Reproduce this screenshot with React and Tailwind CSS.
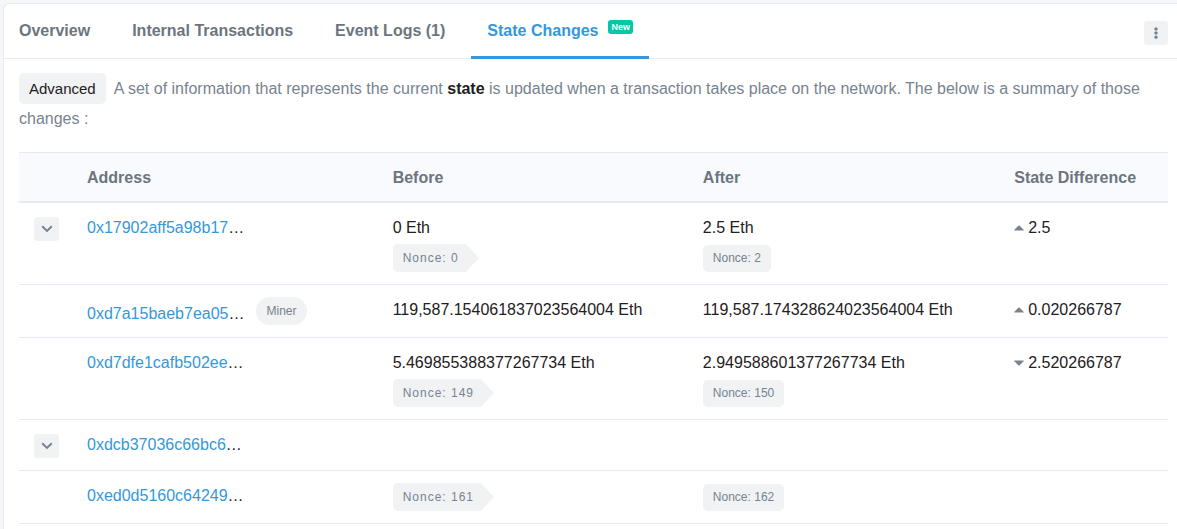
import { FaEllipsisV } from "react-icons/fa";

const tabs = [
  { label: "Overview" },
  { label: "Internal Transactions" },
  { label: "Event Logs (1)" },
  { label: "State Changes", active: true, badge: "New" },
];

const rows = [
  {
    address: "0x17902aff5a98b17",
    expandable: true,
    before: "0 Eth",
    nonceBefore: 0,
    after: "2.5 Eth",
    nonceAfter: 2,
    direction: "up",
    difference: "2.5",
  },
  {
    address: "0xd7a15baeb7ea05",
    tag: "Miner",
    before: "119,587.154061837023564004 Eth",
    after: "119,587.174328624023564004 Eth",
    direction: "up",
    difference: "0.020266787",
  },
  {
    address: "0xd7dfe1cafb502ee",
    before: "5.469855388377267734 Eth",
    nonceBefore: 149,
    after: "2.949588601377267734 Eth",
    nonceAfter: 150,
    direction: "down",
    difference: "2.520266787",
  },
  { address: "0xdcb37036c66bc6", expandable: true },
  { address: "0xed0d5160c64249", nonceBefore: 161, nonceAfter: 162 },
];

function Chevron() {
  return (
    <svg viewBox="0 0 12 8" className="h-2 w-3" fill="none" stroke="currentColor" strokeWidth="2" aria-hidden="true">
      <path d="M1.2 1.3 6 5.9l4.8-4.6" />
    </svg>
  );
}

function Caret({ direction }) {
  return (
    <svg viewBox="0 0 10 6" className="h-1.5 w-2.5 text-[#77838f]" fill="currentColor" aria-hidden="true">
      <path
        d={
          direction === "up"
            ? "M.8 5.6Q-.2 5.6.4 4.8L4.3.8Q5 .1 5.7.8L9.6 4.8Q10.2 5.6 9.2 5.6Z"
            : "M.8.4Q-.2.4.4 1.2L4.3 5.2Q5 5.9 5.7 5.2L9.6 1.2Q10.2.4 9.2.4Z"
        }
      />
    </svg>
  );
}

function NonceBefore({ value }) {
  return (
    <div className="flex">
      <span className="rounded-l-[5px] bg-[#f0f2f4] pr-[7px] pl-2.5 text-xs leading-7 tracking-[1px] text-[#77838f]">
        Nonce: {value}
      </span>
      <span className="border-y-[14px] border-l-[13px] border-y-transparent border-l-[#f0f2f4]" />
    </div>
  );
}

function NonceAfter({ value }) {
  return (
    <div className="flex pt-px">
      <span className="rounded-[5px] bg-[#f0f2f4] px-2.5 text-xs leading-[27px] text-[#77838f]">
        Nonce: {value}
      </span>
    </div>
  );
}

function StateRow({ row }) {
  return (
    <tr className="align-top">
      <td className="py-3 pl-[15px]">
        {row.expandable && (
          <button
            type="button"
            aria-label="Show storage changes"
            className="mt-0.5 flex h-6 w-[25px] items-center justify-center rounded-[3px] bg-[#f0f2f4] text-[#77838f]"
          >
            <Chevron />
          </button>
        )}
      </td>
      <td className="px-3 py-3">
        <div className="flex items-end gap-3">
          <span className={row.tag ? "leading-[22px]" : "leading-[26px]"}>
            <a href="#address" className="text-[#3498db]">{row.address}</a>…
          </span>
          {row.tag && (
            <span className="rounded-full bg-[#f0f2f4] px-2.5 text-xs leading-7 text-[#77838f]">{row.tag}</span>
          )}
        </div>
      </td>
      <td className="px-3 py-3">
        <div className="flex flex-col gap-[3px]">
          {row.before && <div>{row.before}</div>}
          {row.nonceBefore !== undefined && <NonceBefore value={row.nonceBefore} />}
        </div>
      </td>
      <td className="px-3 py-3">
        <div className="flex flex-col gap-[3px]">
          {row.after && <div>{row.after}</div>}
          {row.nonceAfter !== undefined && <NonceAfter value={row.nonceAfter} />}
        </div>
      </td>
      <td className="px-3 py-3">
        {row.difference && (
          <div className="flex items-center gap-1">
            <Caret direction={row.direction} />
            <span>{row.difference}</span>
          </div>
        )}
      </td>
    </tr>
  );
}

export default function App() {
  return (
    <div className="min-h-screen bg-[#f5f6f8] pt-[3px] pl-[3px] font-['Liberation_Sans',Arial,sans-serif] text-base leading-[26px] text-[#1e2022]">
      <main className="min-h-screen rounded-tl-md bg-white shadow-[inset_1px_1px_0_#e7eaf3]">
        <header className="flex items-center justify-between border-b border-[#e7eaf3] pr-[9px]">
          <nav className="-mb-px flex gap-2.5">
            {tabs.map((tab) => (
              <a
                key={tab.label}
                href="#tab"
                aria-current={tab.active ? "page" : undefined}
                className={
                  tab.active
                    ? "flex border-b-3 border-[#3498db] px-4 pt-[15px] pb-3 font-bold text-[#3498db]"
                    : "flex border-b-3 border-transparent px-4 pt-[15px] pb-3 font-bold text-[#6c757e]"
                }
              >
                {tab.label}
                {tab.badge && (
                  <span className="mt-0.5 ml-2.5 self-start rounded-[3px] bg-[#00c9a7] px-[3px] text-[9px] leading-[14px] text-white">
                    {tab.badge}
                  </span>
                )}
              </a>
            ))}
          </nav>
          <button
            type="button"
            aria-label="More options"
            className="mt-1 flex size-6 items-center justify-center rounded-[3px] bg-[#f0f2f4] text-[#77838f]"
          >
            <FaEllipsisV className="size-3" />
          </button>
        </header>

        <section className="pt-[15px] pr-[9px] pl-4">
          <p className="mb-[18px] leading-[30px] text-[#77838f]">
            <span className="mr-2 rounded-[5px] bg-[#f0f2f4] px-2.5 py-[7px] text-[15px] text-[#1e2022]">Advanced</span>
            A set of information that represents the current <strong className="text-[#1e2022]">state</strong> is
            updated when a transaction takes place on the network. The below is a summary of those changes :
          </p>

          <div className="overflow-x-auto">
            <table className="w-full min-w-[1080px] table-fixed border-separate border-spacing-0 text-left [&_td]:border-b [&_td]:border-[#e7eaf3]">
              <thead>
                <tr className="text-[#6c757e] [&>th]:border-t [&>th]:border-b-2 [&>th]:border-[#e7eaf3] [&>th]:bg-[#f8fafd] [&>th]:px-3 [&>th]:pt-3 [&>th]:pb-2.5">
                  <th className="w-14" aria-label="Expand" />
                  <th className="w-[26.6%]">Address</th>
                  <th className="w-[27%]">Before</th>
                  <th className="w-[27.1%]">After</th>
                  <th>State Difference</th>
                </tr>
              </thead>
              <tbody>
                {rows.map((row) => (
                  <StateRow key={row.address} row={row} />
                ))}
              </tbody>
            </table>
          </div>
        </section>
      </main>
    </div>
  );
}
